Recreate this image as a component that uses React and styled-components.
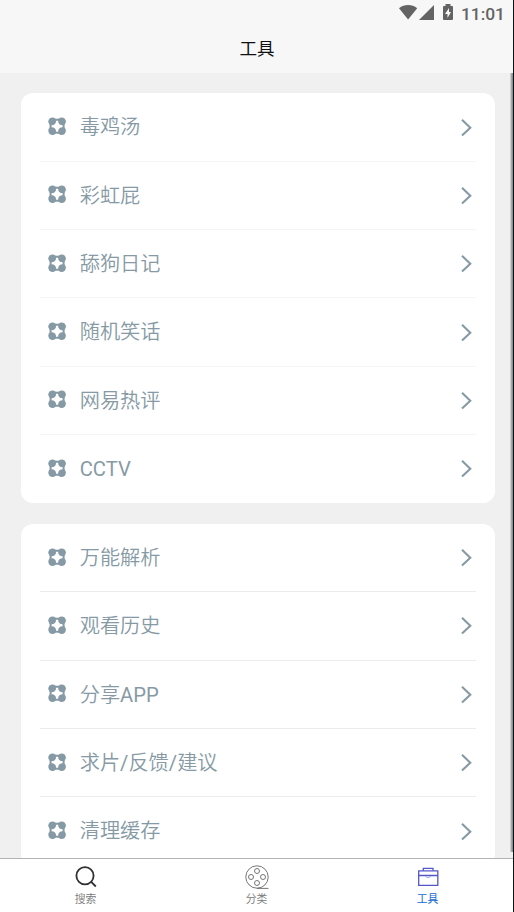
import styled, { createGlobalStyle } from "styled-components";
import React from "react";

const GlobalStyle = createGlobalStyle`
  * {
    box-sizing: border-box;
  }

  body {
    margin: 0;
    overflow: hidden;
    font-family: Roboto, "Noto Sans CJK SC", sans-serif;
  }

  svg {
    display: block;
    flex: none;
  }
`;

const Screen = styled.div`
  position: relative;
  display: flex;
  flex-direction: column;
  width: 514px;
  height: 912px;
  border-right: 1px solid #0b1216;
  background-color: #f0f0f0;
`;

const Header = styled.header`
  flex: none;
  height: 73px;
  background-color: #f7f7f7;
`;

const StatusBar = styled.div`
  display: flex;
  justify-content: flex-end;
  height: 25px;
  padding-right: 8px;
  color: #636363;
`;

const Clock = styled.span`
  margin-left: 6px;
  font-size: 17.4px;
  font-weight: 500;
  line-height: 28px;
`;

const Title = styled.h1`
  margin: 0;
  padding-left: 1px;
  color: #111;
  font-size: 17.5px;
  font-weight: 400;
  line-height: 49px;
  text-align: center;
`;

const Content = styled.main`
  flex: 1;
  display: flex;
  flex-direction: column;
  gap: 20.5px;
  min-height: 0;
  padding: 20.4px 18.4px 0 20.6px;
  overflow: hidden;
`;

const Card = styled.section`
  flex: none;
  padding: 0 19px 0 19.5px;
  border-radius: 12px;
  background-color: #fff;
`;

const Row = styled.div`
  display: flex;
  align-items: center;
  height: 68.35px;
  padding: 0 2.9px 0 8px;
  border-bottom: 1px solid ${({ line }) => line || "transparent"};
  color: #869aa5;

  & > svg:first-child {
    margin-bottom: 1px;
  }
`;

const Label = styled.span`
  flex: 1;
  margin-left: 12.6px;
  padding-top: 0.6px;
  font-size: 20.2px;
  font-weight: 350;
  line-height: 30px;
`;

const Latin = styled.span`
  font-weight: 400;
`;

const Scrollbar = styled.div`
  position: absolute;
  top: 73px;
  right: 0;
  width: 3px;
  height: 779px;
  background: linear-gradient(90deg, #cfcfcf 0 1px, #a8a8a8 1px 2px, #8c9092 2px);
`;

const TabBar = styled.nav`
  flex: none;
  display: grid;
  grid-template-columns: repeat(3, 1fr);
  height: 54px;
  border-top: 1px solid #b4b4b4;
  background-color: #fff;
`;

const Tab = styled.div`
  display: flex;
  flex-direction: column;
  align-items: center;
  padding-top: 5px;
  color: ${({ active }) => (active ? "#1469d6" : "#777")};
  font-size: 10.8px;
  font-weight: ${({ active }) => (active ? 400 : 350)};
  line-height: 16px;

  svg {
    margin-bottom: 2px;
  }
`;

const StatusIcons = () => (
  <svg width="56" height="25" viewBox="0 0 56 25" fill="currentColor">
    <path d="M0 8.2C5.2 3.9 13 3.9 18.2 8.2L9.1 19.5Z" />
    <path d="M35 5V20H20Z" />
    <path
      fillRule="evenodd"
      d="M46.5 4H51.5V6H53Q54 6 54 7V19Q54 20 53 20H45Q44 20 44 19V7Q44 6 45 6H46.5ZM50 8L46 14H48.5V18L52 12H50Z"
    />
  </svg>
);

const CloverIcon = () => (
  <svg width="19" height="19" viewBox="0 0 19 19" fill="currentColor">
    <circle cx="4.5" cy="4.6" r="4.2" />
    <circle cx="13.7" cy="4.6" r="4.2" />
    <circle cx="4.5" cy="13.8" r="4.2" />
    <circle cx="13.7" cy="13.8" r="4.2" />
    <path d="M1.6 1.7H16.6V16.7H1.6Z" />
    <path
      fill="#fff"
      d="M8.1 3.7H10.1Q10.2 8.1 14.6 8.2V10.2Q10.2 10.3 10.1 14.7H8.1Q8 10.3 3.6 10.2V8.2Q8 8.1 8.1 3.7Z"
    />
  </svg>
);

const ChevronIcon = () => (
  <svg width="13" height="19" viewBox="0 0 13 19" fill="none" stroke="currentColor" strokeWidth="2.1">
    <path d="M2 1.8L10.3 9.7L2 17.6" />
  </svg>
);

const SearchIcon = () => (
  <svg width="26" height="26" viewBox="0 0 26 26" fill="none" stroke="#303034" strokeWidth="1.8">
    <circle cx="12" cy="11.7" r="8.6" />
    <path d="M18.2 17.8L22.8 22.5" />
  </svg>
);

const ReelIcon = () => (
  <svg width="26" height="26" viewBox="0 0 26 26" fill="none" stroke="#68686c" strokeWidth="0.9">
    <circle cx="13" cy="13" r="11.2" />
    <circle cx="13" cy="7" r="2.5" />
    <circle cx="7" cy="13" r="2.5" />
    <circle cx="19" cy="13" r="2.5" />
    <circle cx="13" cy="19" r="2.5" />
    <path d="M13 24.4H24.5" />
  </svg>
);

const BriefcaseIcon = () => (
  <svg width="26" height="26" viewBox="0 0 26 26" fill="none" stroke="#5357c7" strokeWidth="1.3">
    <path d="M3.7 6.8H22.8V21.4H3.7Z" />
    <path d="M8.3 6.8V4.4H18V6.8M3.7 11.5H22.8" />
    <path d="M10.8 12Q11 13.6 13.2 13.6Q15.4 13.6 15.6 12" stroke="#a5a7e8" strokeWidth="1" />
  </svg>
);

const groups = [
  {
    items: ["毒鸡汤", "彩虹屁", "舔狗日记", "随机笑话", "网易热评", "CCTV"],
    line: "#f5f5f5",
  },
  {
    items: ["万能解析", "观看历史", "分享APP", "求片/反馈/建议", "清理缓存"],
    line: "#ececec",
  },
];

const tabs = [
  { label: "搜索", Icon: SearchIcon },
  { label: "分类", Icon: ReelIcon },
  { label: "工具", Icon: BriefcaseIcon, active: true },
];

// Roboto looks too thin next to the CJK glyphs at the same weight
const renderLabel = (text) =>
  text
    .split(/([A-Z/]+)/)
    .map((part, i) => (i % 2 ? <Latin key={i}>{part}</Latin> : part));

const App = () => (
  <>
    <GlobalStyle />
    <Screen>
      <Header>
        <StatusBar>
          <StatusIcons />
          <Clock>11:01</Clock>
        </StatusBar>
        <Title>工具</Title>
      </Header>
      <Content>
        {groups.map(({ items, line }) => (
          <Card key={items[0]}>
            {items.map((item, i) => (
              <Row key={item} line={i < items.length - 1 ? line : null}>
                <CloverIcon />
                <Label>{renderLabel(item)}</Label>
                <ChevronIcon />
              </Row>
            ))}
          </Card>
        ))}
      </Content>
      <TabBar>
        {tabs.map(({ label, Icon, active }) => (
          <Tab key={label} active={active}>
            <Icon />
            {label}
          </Tab>
        ))}
      </TabBar>
      <Scrollbar />
    </Screen>
  </>
);

export default App;
